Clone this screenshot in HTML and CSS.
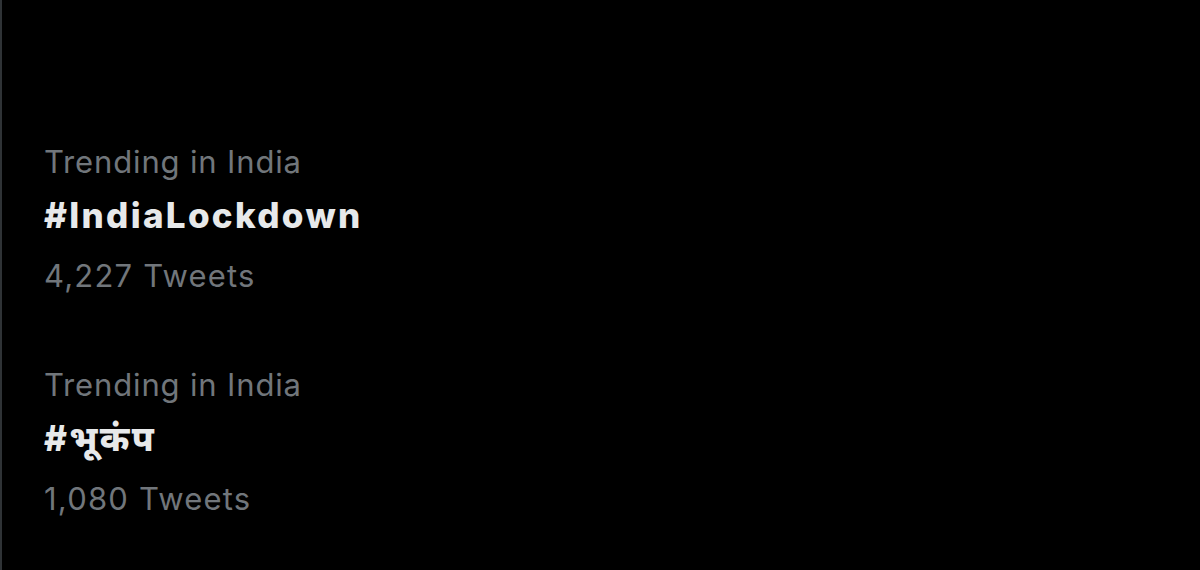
FILE: index.html
```html
<!DOCTYPE html>
<html>
<head>
<meta charset="utf-8">
<link rel="stylesheet" href="styles.css">
</head>
<body>
<div class="panel">
  <div class="trend">
    <div class="label">Trending in India</div>
    <div class="tag">#IndiaLockdown</div>
    <div class="count">4,227 Tweets</div>
  </div>
  <div class="trend">
    <div class="label">Trending in India</div>
    <div class="tag">#भूकंप</div>
    <div class="count">1,080 Tweets</div>
  </div>
</div>
</body>
</html>
```
FILE: styles.css
```css
html, body {
  margin: 0;
  padding: 0;
  background: #000;
}
.panel {
  width: 1200px;
  height: 570px;
  box-sizing: border-box;
  border-left: 2px solid #2f3336;
  background: #000;
  padding: 142px 0 0 42px;
  font-family: Inter, "Noto Sans", "Noto Sans Devanagari", sans-serif;
  display: flex;
  flex-direction: column;
  gap: 69px;
}
.trend {
  display: flex;
  flex-direction: column;
}
.label, .count {
  color: #71767b;
  font-size: 31px;
  line-height: 40px;
  letter-spacing: 0.85px;
}
.count {
  letter-spacing: 1.2px;
  margin-top: 21px;
}
.tag {
  color: #e7e9ea;
  font-size: 35px;
  font-weight: 800;
  line-height: 40px;
  letter-spacing: 2.3px;
  margin-top: 13px;
}
```
